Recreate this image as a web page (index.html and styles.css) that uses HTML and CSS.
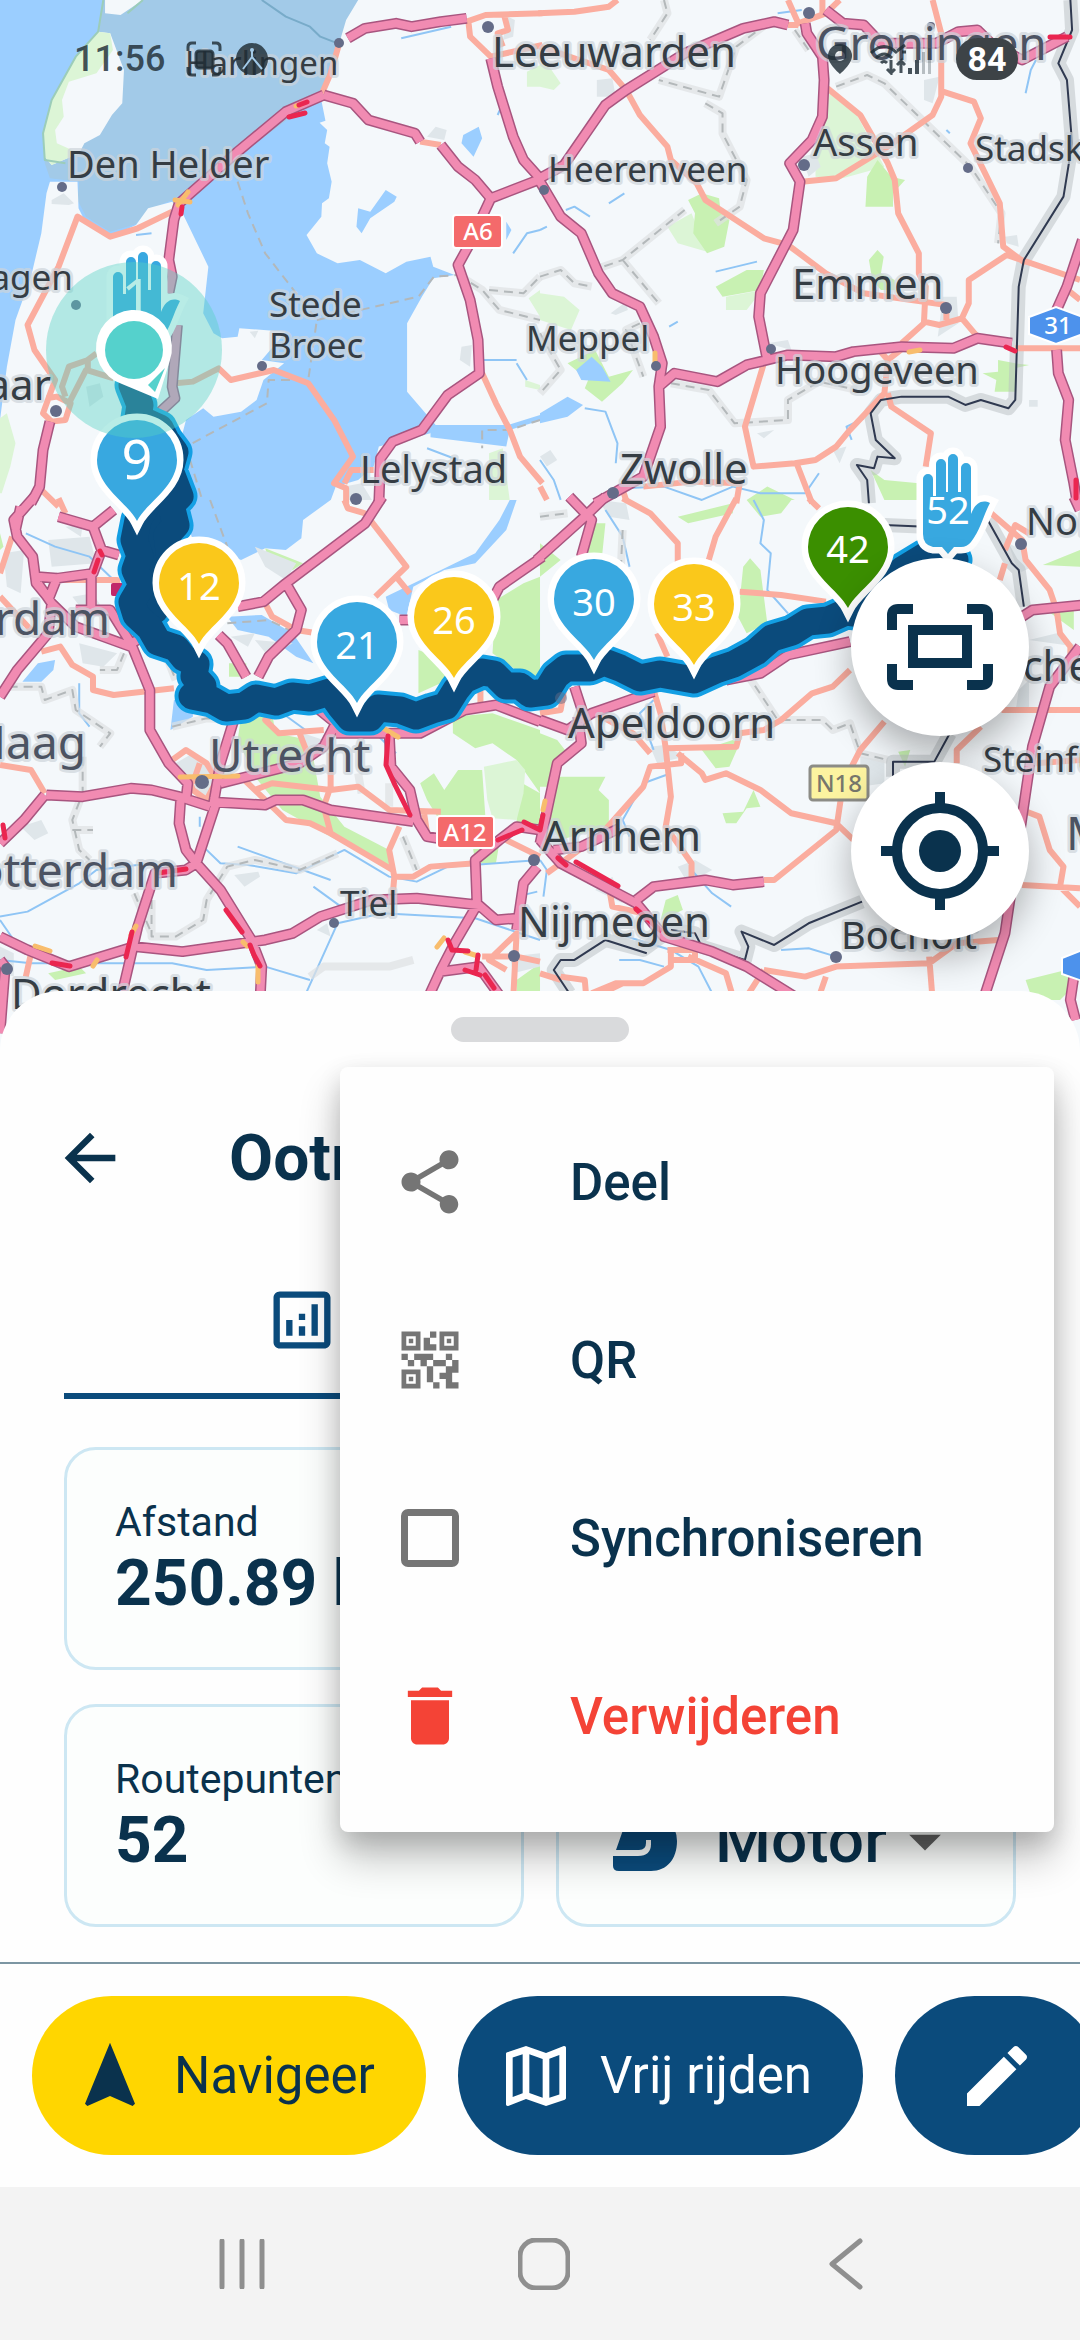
FILE: index.html
```html
<!DOCTYPE html>
<html lang="nl">
<head>
    <meta charset="UTF-8">
    <meta name="viewport" content="width=device-width, initial-scale=1.0">
    <title>Route</title>
    <link rel="stylesheet" href="styles.css">
</head>
<body>
<div class="screen">

    <section class="map">
        <svg class="map-canvas" viewBox="0 0 1080 1060" preserveAspectRatio="xMidYMin slice" role="img" aria-label="Kaart met route">
            <defs>
                <path id="m1" class="line" d="M1010,115L1060,85 1150,70 1195,80 1280,65 1355,55M940,285L1025,310 1070,360 1205,400 1220,425M1280,435L1330,500 1380,540 1425,595 1575,535M1425,175L1445,260 1490,410 1520,480 1568,535M940,285L830,335 690,455 520,610 505,660 490,780 500,830 490,880M515,975L500,1160 508,1195 450,1250M1425,595L1400,650 1370,720 1330,795 1365,900 1388,1020 1392,1120 1300,1185 1225,1290 1140,1325 1105,1375 1100,1510M145,1265L125,1350 115,1460 90,1510"/>
                <path id="m2" class="line" d="M-10,540L70,495 190,315 250,270 420,160 590,85 680,65 720,75M770,70L775,100 820,170 825,240 820,350 790,420 725,490 755,545 735,690 640,880 635,950 660,1080M830,30L880,70 940,75 990,130 1150,130 1215,95 1270,90 1310,130 1400,180 1530,110M0,545L60,650 120,700 170,820 210,880 290,920 330,1010 355,1090 345,1160 350,1280 300,1430 160,1510M345,1160L390,1120 515,1145 600,1095 720,1065 860,1070 910,1055 1050,1040 1200,1045 1270,1015 1370,1030M1575,720L1530,860 1500,930M1500,1050L1505,1120 1535,1200 1525,1320 1550,1450 1560,1510"/>
                <path id="m3" class="line" d="M100,-10L40,60 50,110 95,170 105,250 145,300M60,20L45,90M330,30L270,80 170,50M270,80L295,150 345,165M295,150L270,220 165,235 110,230M265,220V325M165,235L140,300M110,250L150,310 140,400 50,510 0,590M150,310L220,380 380,440M220,330H320L380,430 435,570V690L490,790 545,850 540,900M380,430L420,410M1110,-10L1060,70 830,250 765,305 690,320M830,250L875,330 860,390 780,470 750,530M635,405L660,430 715,530M685,640L640,790 620,910M640,850L870,790 940,740 975,670 910,615M975,700H1220L1350,630 1440,615 1568,665M1130,700L1135,800 1190,870 1210,960 1240,1010 1270,1015M135,885L240,890 380,865 440,870 520,890 610,920M610,905L770,915 800,900H880L960,930 1200,965M0,1030L70,960 130,885M525,890L520,970 540,1050 570,1090 630,900M570,1090L640,1170 730,1320 760,1400 755,1500M570,1090L540,1110 450,1120 400,1280 350,1500M0,1310L80,1350 200,1400 390,1340 530,1355 770,1320 850,1300 930,1250 1080,1200 1210,1195 1390,1215 1440,1260 1500,1255M1385,1215L1380,1080 1450,1020 1500,980 1568,990M1385,1215L1320,1330 1280,1410 1240,1500M1500,1290L1520,1150 1560,1100M1280,1415L1390,1400 1460,1500M1575,170L1450,260 1430,300M1160,360H1200M0,1380L15,1400 0,1600"/>
                <path id="m4" class="line" d="M-10,180L130,50 190,-10M85,-10L150,60 120,170M100,560L125,640M0,660L80,690 150,640 330,575M110,650L120,730 50,790 0,1030M0,1020L60,1090 280,1210 360,1310 500,1355 600,1400 740,1490M40,1050L120,1040 230,985M280,1200L330,1160 480,1140 560,1155 650,1145M540,540L640,520 720,465 900,425M1400,350L1430,330 1575,315M1568,440L1480,560 1430,740 1400,950 1350,1300 1290,1490M1550,-10L1568,30M1550,1430L1540,1500 1555,1560"/>
                <path id="route" d="M132,385L140,405 138,418 160,428 166,440 175,452 170,470 180,496 171,505 176,525 167,535 170,560M150,500L138,520 134,540 140,556 135,570 142,585 132,602 136,615 150,628 158,642 176,648 184,658 196,664 194,676 203,686 192,696 212,700 226,708 244,706 256,698 276,702 292,696 310,698 330,692 340,706 350,718 370,718 378,708 400,710 416,716 432,710 446,706 456,690 464,680 482,672 494,674 506,686 520,686 530,694 546,692 556,676 566,668 590,668 604,662 620,668 640,678 660,674 694,680 716,670 734,664 756,652 772,638 792,632 808,622 828,620 846,612 862,614 890,590 902,570 925,556 955,560"/>
                <path id="pin" d="M0,61C-9,43-40,27-40,0A40,40 0 1 1 40,0C40,27 9,43 0,61Z"/>
                <path id="hand" d="M0,25a5,5 0 0 1 10,0V42h3V10a5,5 0 0 1 10,0V38h2V5a5,5 0 0 1 10,0V38h3V14a5,5 0 0 1 10,0V60C52,50 58,45 67,49C60,62 58,75 48,88Q44,93 38,93H31L25,100L19,93H10Q0,91 0,80Z"/>
            </defs>

            <rect class="land" width="1080" height="1060"/>

            <!-- north west -->
            <g transform="scale(.3444 .3333)">
                <path class="water" d="M0,0H1568V900L1568,1500H0Z"/>
                <path class="wadden" d="M300,0H1040L1010,60 985,130 960,200 930,285 690,470 500,600 430,630 395,672 320,695 250,650 225,600 230,545 145,535 130,490 125,400 150,300 220,170 285,95Z"/>
                <path class="land" d="M1040,0H1570V1502H960L975,1460 1040,1440 1085,1400 1100,1340 1250,1300 1265,1275 1182,1175V970L1225,890 1258,835 1320,825 1258,800 1250,770 1180,785 1120,820 1045,780 980,790 920,760 890,705 933,650 935,610 955,595 963,545 950,490 957,440 943,430 950,390 928,368 945,362 930,285 960,200 985,130 1005,60Z"/>
                <path class="land" d="M145,545H225L228,625 250,670 320,710 395,675 430,625 500,605 530,640 605,800 590,940 620,1000 645,1015 690,1010 695,985 830,995 760,1080 825,1090 765,1140 745,1200 700,1235 620,1250 590,1225 540,1260 520,1340 545,1400 560,1502H0V1260L20,1100 45,960 90,830 120,700 135,580Z"/>
                <path class="land" d="M285,95L320,100 360,210 355,310 325,345 290,405 245,430 230,460 150,495 130,470 125,400 150,300 220,170ZM305,0H415L350,45 305,40Z"/>
                <path class="park" d="M285,95L320,100 328,150 280,220 200,245 180,300 185,350 160,390 165,430 230,460 150,495 130,470 125,400 150,300 220,170ZM0,1255L20,1240 45,1330 30,1400 5,1480 0,1480Z"/>
                <path class="coast line" d="M415,0L370,40M300,0L285,95L220,170 150,300 125,400 130,480 190,490"/>
                <path class="water" d="M1250,1275H1475L1568,1245V1262L1480,1290 1470,1340 1250,1312ZM1345,405L1390,380 1400,415 1375,470 1340,430ZM1040,625L1075,635 1120,570 1152,590 1145,605 1075,655 1050,700 1035,680ZM1470,665L1485,690 1470,720Z"/>
                <path class="park" d="M1530,215L1568,195V260H1530ZM1535,895L1568,870V950ZM1420,1360L1460,1345 1480,1500H1420ZM1525,1140L1568,1155V1170L1525,1160Z"/>
                <path class="urban" d="M150,600L185,580 215,610 200,615 150,612ZM1240,410L1265,380 1297,390 1290,420ZM1340,1040L1370,1035 1365,1100 1335,1080ZM1475,50L1495,60 1490,110 1460,120ZM725,995L750,992 740,1015ZM250,1160L290,1150 300,1190 260,1220ZM1000,1460L1050,1450 1080,1500H1000Z"/>
                <path class="river line" d="M395,705L440,700M1165,115L1310,80M1500,1080L1400,1080M1500,1090L1530,1140M1490,760L1530,700 1568,690M1445,345L1460,310M1240,1345L1330,1380"/>
                <path class="ferry line" d="M760,0L830,50 900,80 930,110 975,128"/>
                <path class="district line" d="M690,545L720,640 770,760 860,880 920,960 895,1140 780,1140 775,1210 540,1340 590,1510M920,960L1215,890 1260,830 1330,825"/>
                <path class="halo line" d="M1330,825L1400,870 1450,930 1568,960M1420,870L1520,880 1568,830"/>
                <path class="district line" d="M1330,825L1400,870 1450,930 1568,960M1420,870L1520,880 1568,830M1568,1260L1480,1290H1400V1345"/>
                <path class="primary line" d="M985,130L960,220 935,280M1355,65L1410,45 1575,40M1360,65L1365,110 1425,170 1575,135M1465,50L1475,90 1445,100 1460,140M500,635L400,685 320,710 225,650 170,800 80,975 100,1050 160,1140 125,1240 150,1265 190,1260 205,1210 165,1190 135,1195M190,1190L180,1160 200,1100 255,1080 280,1060M200,1210L250,1110 330,1135M255,1110V1080M510,1150L560,1145 635,1105 670,1140 795,1110 895,1150 970,1260 1025,1370 970,1450 1005,1465 1005,1510M1085,1410H1020L1000,1450M1400,1120L1440,1210 1480,1290 1510,1370 1575,1450M1220,425L1280,435M120,1470L170,1520"/>
            </g>

            <!-- north east -->
            <g transform="translate(540) scale(.3444 .3333)">
                <path class="park" d="M840,280L920,345 1000,500 860,540 800,530 800,440ZM0,190L30,205 60,250 40,270 0,260ZM370,680L440,640 485,755 400,730ZM540,890L645,870 600,930 540,930ZM0,880L70,890 115,930 90,990 0,960Z"/>
                <path class="wood" d="M980,480L1020,530 1060,540 1025,580V620L945,620 950,530ZM430,600L470,580 520,595 525,640 550,660 535,740 485,760 445,700 450,640ZM510,860L600,810 650,810 640,870 530,890ZM955,780L980,750 998,770 990,820 1030,840V870L990,870 965,840ZM1285,1120L1330,1115V1080L1380,1090 1420,1095 1380,1105V1175L1320,1175 1325,1140ZM80,1090L160,1050 200,1130 270,1110 240,1150 180,1205 130,1165 140,1140ZM960,1410L1000,1440 1100,1450V1500H1000ZM600,1500L660,1460 740,1500Z"/>
                <path class="water" d="M105,1110L150,1070 180,1100 205,1145 120,1140ZM0,1240L80,1190 125,1215 80,1250 0,1270Z"/>
                <path class="urban" d="M165,240L210,235 220,290 165,290ZM1115,240L1160,230 1140,310 1115,300ZM760,470L800,460 815,500 780,530ZM1170,890L1210,890 1215,970 1155,1010ZM660,1030L720,1020 730,1050ZM205,940L250,905 255,930 220,945ZM630,1300L680,1290 650,1315ZM0,1370L30,1350 50,1380 20,1400ZM850,1350L890,1340 870,1390ZM1420,1200H1445V1220H1420ZM1350,710L1385,705 1390,740 1355,730Z"/>
                <path class="river line" d="M75,630L100,620 145,650M200,610L245,580M0,690L20,680M375,980L400,965M510,815L570,800 630,785M130,1225L190,1235 210,1290 225,1330 220,1390M0,1380L40,1440 60,1500M240,1465L360,1460 470,1500 560,1460 640,1480 770,1480 810,1420M940,1255L890,1280 905,1320M1410,280L1425,210 1440,180M1180,390L1190,400M690,40L760,30"/>
                <path class="halo line" d="M360,0L370,40 320,120M660,70L570,140 520,290 345,240M480,310L530,340V400L600,540 580,620 510,670M420,630L240,780 170,805M240,780L345,910M860,260L950,225 1000,250 1250,500 1340,640 1330,730M0,830L60,810 100,850 150,860M380,1150L490,1170 565,1270 720,1260 720,1200 810,1145 920,1170M0,1000L60,1110 0,1180M290,970L250,990 300,1130M740,90L780,150"/>
                <path class="district line" d="M360,0L370,40 320,120M660,70L570,140 520,290 345,240M480,310L530,340V400L600,540 580,620 510,670M420,630L240,780 170,805M240,780L345,910M860,260L950,225 1000,250 1250,500 1340,640 1330,730M0,830L60,810 100,850 150,860M380,1150L490,1170 565,1270 720,1260 720,1200 810,1145 920,1170M0,1000L60,1110 0,1180M290,970L250,990 300,1130M740,90L780,150"/>
                <path class="border-halo line" d="M1540,0L1545,90 1505,190 1530,240 1545,430 1520,590 1405,780 1390,860 1380,1200 1360,1225 1280,1200 1235,1215 1185,1190H1050L990,1200 960,1240 975,1320 1030,1375 980,1370 970,1405 920,1395 950,1440 955,1510"/>
                <path class="primary line" d="M-5,40L100,35 200,20 225,0M-5,138L200,210 250,270 290,345 370,440 380,480 455,550 480,600 650,715 720,735 830,820 940,880 1110,905 1180,915V960M720,0L750,70 830,40 870,0M720,75H750M820,0V40M835,265L930,345 1010,490 1030,540 1040,640 1100,760 1100,820 1120,860 1115,965 1160,975 1225,955 1245,910V840L1355,765 1568,840M1140,0L1165,100V290L1140,345 1010,440 860,535 760,545M1170,275L1260,305 1280,355 1250,430 1335,610 1345,740 1410,790M1120,965L1050,1030M1225,955L1270,1010M1380,1045H1575M985,1050L1010,1080 1060,1040M1010,1080L1000,1180 900,1290 860,1340 800,1380 740,1390 620,1400 595,1280 650,1090M1010,1180L1020,1220 1135,1300 1120,1400M745,1390L790,1510M300,1460L440,1445 580,1450 570,1510M0,1460L20,1500M1520,860L1568,900M240,1470L250,1500"/>
                <path class="border line" d="M1540,0L1545,90 1505,190 1530,240 1545,430 1520,590 1405,780 1390,860 1380,1200 1360,1225 1280,1200 1235,1215 1185,1190H1050L990,1200 960,1240 975,1320 1030,1375 980,1370 970,1405 920,1395 950,1440 955,1510"/>
            </g>

            <!-- south west -->
            <g transform="translate(0 500) scale(.3444 .3333)">
                <path class="water" d="M520,0H960L880,60 875,115 830,150 770,145 700,180 560,120ZM1480,0H1500L1470,90 1380,190 1290,210 1200,260 1180,350 1130,330 1120,290 1300,200 1380,160 1450,60ZM660,350L760,345 850,400 910,490 860,470 780,410 690,390ZM505,600L560,590V650L495,690ZM65,545L110,490 160,480 155,510 120,545Z"/>
                <path class="wood" d="M665,490H715V530H665ZM700,650L790,640 800,700 900,720 930,890 1000,980 1130,1050V1100L960,1010 820,930 740,830 690,720ZM1215,450L1290,480 1300,540 1215,580ZM1440,300L1520,250 1568,230V560L1430,460ZM1315,650L1430,640 1568,690V880L1500,780 1430,730 1380,745 1315,700ZM1220,850L1260,820 1290,870 1330,810 1400,810 1410,960 1270,950 1240,900ZM1500,840L1568,880V980H1500ZM1370,1020L1450,1030 1440,1090 1380,1090ZM1500,1440L1568,1390V1500H1500ZM140,1420L230,1400 250,1420 160,1440ZM770,145L880,190 850,210 780,180ZM0,100L10,140 0,150Z"/>
                <path class="park" d="M1405,800L1500,780 1525,810 1520,880 1500,960 1430,955 1415,900Z"/>
                <path class="urban" d="M140,120L260,110 280,190 150,200ZM190,80L240,75 235,110ZM10,160L70,150 60,280 20,260ZM210,290L270,280 300,330 240,330ZM740,140L860,190 830,240 770,200ZM670,410L740,400 720,440ZM510,790L560,760 600,800 620,850 590,900 540,860ZM60,980L120,960 140,1000 100,1020ZM680,1125L750,1115 755,1130 710,1160ZM880,700L940,720 930,760 880,740ZM1480,1370L1568,1360V1400L1490,1420ZM0,1340L40,1360 40,1430 0,1420ZM900,610L960,610 940,660ZM920,1290L950,1270 960,1310ZM230,430L340,460 300,500 240,490ZM740,420L850,430 780,470Z"/>
                <path class="river line" d="M75,100L160,140 260,170 330,240M0,1250L80,1235 230,1150 280,1110 440,1090M590,1040L640,1090 720,1095 860,1120 1000,1050 1130,1130 1210,1145 1300,1100 1568,1080M0,1380L90,1390 500,1390 600,1410 770,1400 900,1440M880,1500L980,1270 1110,1240 1380,1255 1568,1320M910,1160L990,1220M690,1040L960,1140M40,1320L0,1260M1500,1190L1560,1175M580,950V980M230,550V640L260,680M820,640L900,700M1090,700L1150,760"/>
                <path class="halo line" d="M25,560L120,560 130,600 210,570 220,630 320,700 290,740M240,770V880L210,960 230,1050 260,1080M210,990H270M440,1200V1310H510L590,1260 600,1200 660,1100 740,1080 870,1110 980,1060M500,680L600,655 680,660M390,1180L440,1300M360,460L340,510 290,510M480,460L510,540M900,1430L940,1400 1130,1400 1200,1380M1170,1010L1210,1110M1040,820L1050,880M1130,850V920"/>
                <path class="district line" d="M25,560L120,560 130,600 210,570 220,630 320,700 290,740M240,770V880L210,960 230,1050 260,1080M210,990H270M440,1200V1310H510L590,1260 600,1200 660,1100 740,1080 870,1110 980,1060M500,680L600,655 680,660M390,1180L440,1300M360,460L340,510 290,510M480,460L510,540M1170,1010L1210,1110M610,0L660,140M660,370L780,360 860,400"/>
                <path class="primary line" d="M170,-5L190,40M35,110L0,220M110,240H340L345,300M0,290L90,390M120,455L175,440 210,495 270,530V570L330,585 505,565M0,795L90,810 130,880M500,780L540,750 600,790 630,840 600,900 560,870 545,830M1000,0L1010,25 1060,40 1180,200 1090,290M1150,230L1190,280M770,310L790,350 860,390 920,400M800,640L770,660 810,700 940,690M710,840L830,960 900,970 960,1000 1140,1110M740,870L790,850 960,870 1040,860 1130,930 1280,935M870,700L900,780M960,760V860L940,920 960,1000M1160,980L1130,1050 1145,1130 1140,1190M1150,1130H1200L1250,1100 1380,1090M1490,1500L1500,1300 1420,1380 1470,1410M75,1430L90,1360M1230,930L1240,1000M1395,570V620M1470,1020L1568,1070M1400,1370L1500,1370 1568,1385M580,790L560,850"/>
            </g>

            <!-- south east -->
            <g transform="translate(540 500) scale(.3444 .3333)">
                <path class="wood" d="M0,700L50,720 80,760 30,860 0,860ZM50,830L190,830 170,870 200,900 200,975 60,1020 20,960ZM590,200L610,175 640,210 660,370 600,400 575,350ZM470,750L560,720 580,730 550,800 510,805ZM530,940L590,935 620,870 640,920 600,925 570,970 540,970ZM365,1200L400,1185 415,1230 350,1260ZM400,50L560,10V40L430,70ZM600,0H730L700,40 640,50ZM150,70L190,70 180,170 150,190 130,150ZM1460,195L1568,150V200ZM1470,330L1550,330V390ZM1410,1440L1568,1400V1440L1510,1500 1430,1500ZM1040,755L1075,750 1060,800ZM0,130L60,180 0,230ZM800,320L850,400H800Z"/>
                <path class="urban" d="M320,740L360,735 420,770 340,790ZM400,1100L450,1080 500,1110 430,1150ZM170,0L250,10 260,60 200,50ZM1360,130L1400,150 1430,200 1390,220ZM1420,420L1500,400 1560,440ZM1390,570L1420,540V620L1380,640ZM930,770L1000,780 1000,850 930,860ZM380,560L440,555 430,575ZM160,1170L210,1130 240,1210Z"/>
                <path class="river line" d="M620,0L650,60 640,130 670,160 660,270 720,340M380,820L300,850 240,960 260,1010M330,600L290,640 330,750M0,1080L20,1110 10,1190M220,1300L380,1350 460,1400 500,1480M230,1380H290L360,1400M440,1110L500,1180 555,1220M700,1350L780,1345 860,1370M190,30L240,110 260,200"/>
                <path class="halo line" d="M0,50L80,40M240,90L235,200M600,520L690,660 820,660 850,690 900,670 930,760 1010,780"/>
                <path class="district line" d="M0,50L80,40M240,90L235,200M600,520L690,660 820,660 850,690 900,670 930,760 1010,780"/>
                <path class="border-halo line" d="M1000,75L1120,80M1300,60L1370,190 1390,210 1405,320M1190,700L1145,785H1025V830M935,1205L780,1270 680,1335 585,1295 605,1340 595,1380 470,1340 450,1300 380,1290 300,1350 190,1320 100,1380 60,1380 40,1410 85,1480"/>
                <path class="primary line" d="M240,-5L320,40 400,130V190M570,-5L510,110 490,180M580,275L700,285 830,305M340,400L370,470M900,510L850,560 790,580 700,660 650,690 580,700 570,740 365,745 350,640 330,570M365,745L380,890 365,980 440,1090V1150M320,760L270,700 170,645M410,760V790L320,800 300,860 180,1000 20,1120M400,760L470,820 480,840 540,820 640,870 730,940 860,970 910,1020M1000,665L930,750 880,850 860,990 680,1140H650M780,-5L810,25M1310,40L1400,120 1410,180 1480,270 1500,330 1510,400 1540,440V480M1350,190L1335,240M1350,150L1380,75 1420,100M1340,630H1575M1280,680L1210,750V790M1400,930L1450,950 1480,1050 1520,1100 1510,1160 1568,1220M1400,1155L1568,1165M380,1350V1400L300,1450 220,1450 150,1480M240,1450L160,1490M370,1350H450V1380H380M430,1370L540,1420 560,1490M650,1410L770,1430 860,1400 1130,1390 1210,1330 1330,1320M1130,1370L1140,1500M600,1490L650,1410M60,1430L130,1440 135,1500M810,1490L830,1430M1440,790L1568,780M70,570L60,630 0,640M200,1160L210,1220 300,1240M0,1420L60,1440"/>
                <path class="border line" d="M1000,75L1120,80M1300,60L1370,190 1390,210 1405,320M1190,700L1145,785H1025V830M935,1205L780,1270 680,1335 585,1295 605,1340 595,1380 470,1340 450,1300 380,1290M310,1360L190,1320 100,1380 60,1380 40,1410 85,1480"/>
            </g>

            <!-- motorways: casing first, then the fill -->
            <g class="casing">
                <use href="#m1" transform="scale(.3444 .3333)"/>
                <use href="#m2" transform="translate(540) scale(.3444 .3333)"/>
                <use href="#m3" transform="translate(0 500) scale(.3444 .3333)"/>
                <use href="#m4" transform="translate(540 500) scale(.3444 .3333)"/>
            </g>
            <g class="motorway">
                <use href="#m1" transform="scale(.3444 .3333)"/>
                <use href="#m2" transform="translate(540) scale(.3444 .3333)"/>
                <use href="#m3" transform="translate(0 500) scale(.3444 .3333)"/>
                <use href="#m4" transform="translate(540 500) scale(.3444 .3333)"/>
            </g>

            <!-- traffic -->
            <path class="slow" d="M178,205L188,192M175,200L190,202M296,106L302,104M383,728L398,737M180,777L238,776M35,946L50,951M136,926L131,935M97,960L93,966M243,942L247,946M258,965V982M437,947L444,938M465,952L478,956M909,352L920,350M655,353V362M545,801L543,810"/>
            <path class="jam" d="M299,105L307,102M289,117L305,113M182,207L181,214M388,736L386,765 395,785 410,815M226,910L242,932M250,945L254,955 260,966M132,932L126,957M448,940L452,950 468,951M478,955L476,970M465,970L480,975M498,840L522,830M524,822L540,830M52,963L70,966M158,873L186,869M98,560L94,572M100,551L102,555M543,815L540,830M558,858L566,865M576,862L618,886M636,909L660,930M1006,347L1015,351M1050,37H1070M1076,480V498M3,825L5,838M485,975L494,988"/>

            <g class="city-dot">
                <circle cx="339" cy="43" r="5"/><circle cx="488" cy="27" r="6"/><circle cx="62" cy="187" r="5"/><circle cx="76" cy="305" r="5"/><circle cx="262" cy="366" r="5"/><circle cx="56" cy="411" r="6"/><circle cx="356" cy="499" r="6"/>
                <circle cx="809" cy="13" r="6"/><circle cx="804" cy="165" r="6"/><circle cx="968" cy="168" r="5"/><circle cx="544" cy="190" r="5"/><circle cx="656" cy="366" r="5"/><circle cx="771" cy="349" r="5"/><circle cx="946" cy="308" r="6"/><circle cx="613" cy="493" r="6"/><circle cx="931" cy="26" r="4"/>
                <circle cx="202" cy="782" r="7"/><circle cx="334" cy="923" r="5"/><circle cx="514" cy="956" r="6"/><circle cx="534" cy="860" r="6"/><circle cx="7" cy="969" r="6"/><circle cx="1021" cy="544" r="6"/><circle cx="836" cy="957" r="6"/>
            </g>
            <rect class="capital" x="111" y="583" width="13" height="13" rx="2"/>

            <g class="route-edge"><path d="M155,505V610"/><use href="#route"/></g>
            <g class="route-core"><path d="M155,505V610"/><use href="#route"/></g>
            <circle class="city-dot faded" cx="561" cy="698" r="6"/>

            <g class="town">
                <text x="185" y="75" class="xs">Harlingen</text>
                <text x="548" y="182">Heerenveen</text>
                <text x="975" y="161">Stadskanaal</text>
                <text x="73" y="290" text-anchor="end">Schagen</text>
                <text x="269" y="317">Stede</text>
                <text x="269" y="358">Broec</text>
                <text x="526" y="351">Meppel</text>
                <text x="340" y="916">Tiel</text>
                <text x="983" y="772">Steinfurt</text>
                <text x="67" y="178" class="md">Den Helder</text>
                <text x="813" y="156" class="md">Assen</text>
                <text x="775" y="384" class="md">Hoogeveen</text>
                <text x="360" y="483" class="md">Lelystad</text>
                <text x="841" y="949" class="md">Bocholt</text>
                <text x="1026" y="535" class="md">Nordhorn</text>
                <text x="492" y="67" class="lg">Leeuwarden</text>
                <text x="51" y="400" class="lg" text-anchor="end">Alkmaar</text>
                <text x="792" y="299" class="lg">Emmen</text>
                <text x="620" y="484" class="lg">Zwolle</text>
                <text x="953" y="681" class="lg">Enschede</text>
                <text x="568" y="738" class="lg">Apeldoorn</text>
                <text x="542" y="851" class="lg">Arnhem</text>
                <text x="518" y="937" class="lg">Nijmegen</text>
                <text x="11" y="1009" class="lg">Dordrecht</text>
                <g class="xl">
                    <text x="816" y="60">Groningen</text>
                    <text x="110" y="635" text-anchor="end">Amsterdam</text>
                    <text x="86" y="759" text-anchor="end">Den Haag</text>
                    <text x="209" y="772">Utrecht</text>
                    <text x="178" y="887" text-anchor="end">Rotterdam</text>
                    <text x="1066" y="850">Münster</text>
                </g>
            </g>

            <g class="shield">
                <rect class="shield-a" x="453" y="215" width="49" height="33" rx="3"/><text x="478" y="240">A6</text>
                <rect class="shield-a" x="437" y="816" width="57" height="32" rx="3"/><text x="465" y="841">A12</text>
                <rect class="shield-n" x="810" y="766" width="58" height="34" rx="3"/><text class="dark" x="839" y="792">N18</text>
                <path class="shield-b" d="M1029,317L1056,307 1083,317V334L1056,344 1029,334Z"/><text x="1058" y="334">31</text>
                <path class="shield-b" d="M1062,958L1085,949V982L1062,974Z"/>
            </g>

            <g class="pins">
                <use class="blue" href="#hand" x="113" y="252"/>
                <text x="137" y="318" class="big">1</text>
                <use class="blue" href="#pin" x="137" y="460"/><text x="137" y="479" class="big">9</text>
                <use class="yellow" href="#pin" x="199" y="583"/><text x="199" y="600">12</text>
                <use class="blue" href="#pin" x="357" y="642"/><text x="357" y="659">21</text>
                <use class="yellow" href="#pin" x="454" y="617"/><text x="454" y="634">26</text>
                <use class="blue" href="#pin" x="594" y="599"/><text x="594" y="616">30</text>
                <use class="yellow" href="#pin" x="694" y="604"/><text x="694" y="621">33</text>
                <use class="green" href="#pin" x="848" y="547"/><text x="848" y="563">42</text>
                <use class="blue" href="#hand" x="923" y="454"/><text x="948" y="524">52</text>
            </g>

            <!-- current position -->
            <circle class="me-halo" cx="134" cy="350" r="88"/>
            <path class="me-edge" d="M122,384A38,38 0 1 1 170,360L158,399Z"/>
            <path class="me-dot" d="M148,385L165,368L155,392Z"/>
            <circle class="me-dot" cx="134" cy="350" r="29"/>
        </svg>

        <header class="status">
            <time>11:56</time>
            <svg width="36" height="36" viewBox="0 0 36 36" fill="none" stroke="currentColor" stroke-width="3"><path d="M2 10V6q0-4 4-4h4M26 2h4q4 0 4 4v4M34 26v4q0 4-4 4h-4M10 34H6q-4 0-4-4v-4"/><rect x="10" y="10" width="17" height="17" rx="3" fill="currentColor"/></svg>
            <svg width="34" height="34" viewBox="0 0 34 34"><circle cx="17" cy="17" r="16" fill="currentColor"/><path d="M17 9v6L8 27M17 15l10 12" stroke="#a2cae8" stroke-width="2" fill="none"/><circle cx="17" cy="8" r="2" fill="#a2cae8"/></svg>
            <span class="spacer"></span>
            <svg width="24" height="30" viewBox="0 0 24 30"><path fill="currentColor" fill-rule="evenodd" d="M12 0a12 12 0 0 1 12 12c0 8-12 18-12 18S0 20 0 12A12 12 0 0 1 12 0zm0 7a5 5 0 1 0 0 10 5 5 0 0 0 0-10z"/></svg>
            <svg class="wifi" width="38" height="32" viewBox="0 0 38 32" fill="none" stroke="currentColor" stroke-width="3"><path d="M2 10Q15-3 28 10M7 15q8-8 16 0M12 20q3-3 6 0M22 17v13l-4-4m4 4 4-4M32 30V18l-4 4m4-4 4 4"/><path d="M28 8l8-6M33 9h4"/></svg>
            <svg class="signal" width="24" height="30" viewBox="0 0 24 30" fill="currentColor"><path d="M1 24h4v6H1zM8 16h4v14H8z"/><path opacity=".35" d="M15 8h3v22h-3zM21 4h3v26h-3z"/></svg>
            <span class="battery">84</span>
        </header>

        <div class="map-controls">
            <button class="fab" type="button" aria-label="Hele route tonen">
                <svg width="106" height="86" viewBox="0 0 106 86" fill="none" stroke="currentColor" stroke-width="10"><path d="M5 26V11q0-6 6-6h15M80 5h15q6 0 6 6v15M101 60v15q0 6-6 6H80M26 81H11q-6 0-6-6V60"/><rect x="26" y="26" width="54" height="33"/></svg>
            </button>
            <button class="fab" type="button" aria-label="Mijn locatie">
                <svg width="118" height="118" viewBox="0 0 118 118" fill="none" stroke="currentColor" stroke-width="10"><circle cx="59" cy="59" r="43"/><path d="M59 0v14M59 104v14M0 59h14M104 59h14"/><circle cx="59" cy="59" r="21" fill="currentColor" stroke="none"/></svg>
            </button>
        </div>
    </section>

    <main class="sheet">
        <div class="handle"></div>

        <div class="sheet-header">
            <button class="icon-btn" type="button" aria-label="Terug">
                <svg class="icon" viewBox="0 0 24 24"><path d="M20 11H7.83l5.59-5.59L12 4l-8 8 8 8 1.41-1.41L7.83 13H20v-2z"/></svg>
            </button>
            <h1>Ootmarsum</h1>
        </div>

        <div class="tabs">
            <button class="tab active" type="button" aria-label="Statistieken">
                <svg class="icon" viewBox="0 0 24 24"><path d="M19 3H5c-1.100 0-2 .9-2 2v14c0 1.100.9 2 2 2h14c1.100 0 2-.9 2-2V5c0-1.100-.9-2-2-2zm0 16H5V5h14v14zM7 12h2v5H7zM15 7h2v10h-2zM11 14h2v3h-2zM11 10h2v2h-2z"/></svg>
            </button>
            <button class="tab" type="button" aria-label="Lijst"></button>
        </div>

        <div class="cards">
            <div class="card">
                <span class="label">Afstand</span>
                <span class="value">250.89 km</span>
            </div>
            <div class="card"></div>
            <div class="card">
                <span class="label">Routepunten</span>
                <span class="value">52</span>
            </div>
            <div class="card">
                <label class="label" for="vehicle">Voertuig</label>
                <div class="vehicle">
                    <svg class="helmet" width="64" height="64" viewBox="0 0 64 64"><path fill="currentColor" d="M8 2h26a30 30 0 0 1 30 30c0 18-10 30-26 30H6q-6 0-6-5V47h25q13 0 13-12v-4h-5v3q0 7-7 7H3l7-20z"/></svg>
                    <select id="vehicle">
                        <option>Motor</option>
                        <option>Auto</option>
                    </select>
                    <svg class="icon caret" viewBox="0 0 24 24"><path d="M7 10l5 5 5-5z"/></svg>
                </div>
            </div>
        </div>

        <div class="menu" role="menu">
            <button class="menu-item" type="button" role="menuitem">
                <svg class="icon" viewBox="0 0 24 24"><path d="M18 16.080c-.76 0-1.440.3-1.960.77L8.910 12.700c.05-.23.09-.46.09-.7s-.04-.47-.09-.7l7.050-4.110c.54.5 1.250.81 2.040.81 1.660 0 3-1.340 3-3s-1.340-3-3-3-3 1.340-3 3c0 .24.04.47.09.7L8.040 9.810C7.500 9.310 6.790 9 6 9c-1.660 0-3 1.340-3 3s1.340 3 3 3c.79 0 1.500-.31 2.040-.81l7.120 4.160c-.05.21-.08.43-.08.65 0 1.610 1.310 2.920 2.920 2.920s2.920-1.310 2.920-2.920-1.310-2.920-2.920-2.920z"/></svg>
                Deel
            </button>
            <button class="menu-item" type="button" role="menuitem">
                <svg class="icon" viewBox="0 0 24 24"><path fill-rule="evenodd" d="M3 3h6v6H3zM4.500 4.500v3h3v-3zM15 3h6v6h-6zM16.500 4.500v3h3v-3zM3 15h6v6H3zM4.500 16.500v3h3v-3zM5.300 5.300h1.400v1.400H5.300zM17.300 5.300h1.400v1.400h-1.400zM5.300 17.300h1.400v1.400H5.300zM12 3h2v2h-2zM10 5h2v2h2v2h-4zM3 10h2v2H3zM5 12h2v2H5zM7 10h6v2h-2v2H9v-2H7zM13 12h4v2h-4zM17 10h2v2h-2zM19 12h2v4h-2zM11 14h2v5h-2zM15 16h4v3h2v2h-4v-3h-2zM17 14h2v2h-2zM13 19h2v2h-2z"/></svg>
                QR
            </button>
            <label class="menu-item" role="menuitem">
                <input type="checkbox" name="sync">
                Synchroniseren
            </label>
            <button class="menu-item danger" type="button" role="menuitem">
                <svg class="icon" viewBox="0 0 24 24"><path d="M6 19c0 1.100.9 2 2 2h8c1.100 0 2-.9 2-2V7H6v12zM19 4h-3.500l-1-1h-5l-1 1H5v2h14V4z"/></svg>
                Verwijderen
            </button>
        </div>
    </main>

    <div class="actions">
        <button class="action primary-action" type="button">
            <svg class="icon" viewBox="0 0 24 24"><path d="M12 2L4.500 20.290l.71.71L12 18l6.790 3 .71-.71z"/></svg>
            Navigeer
        </button>
        <button class="action" type="button">
            <svg class="icon" viewBox="0 0 24 24"><path d="M20.500 3l-.16.030L15 5.100 9 3 3.360 4.900c-.21.070-.36.250-.36.480V20.500c0 .28.220.5.5.5l.16-.030L9 18.900l6 2.100 5.640-1.900c.21-.070.36-.25.36-.48V3.500c0-.28-.22-.5-.5-.5zM10 5.470l4 1.400v11.660l-4-1.400V5.470zM5 6.460l3-1.010v11.700l-3 1.160V6.460zm14 11.080l-3 1.010V6.860l3-1.160v11.840z"/></svg>
            Vrij rijden
        </button>
        <button class="action edit" type="button" aria-label="Bewerken">
            <svg class="icon" viewBox="0 0 24 24"><path d="M3 17.250V21h3.750L17.810 9.940l-3.750-3.750L3 17.250zM20.710 7.040c.39-.39.39-1.020 0-1.410l-2.340-2.340c-.39-.39-1.020-.39-1.410 0l-1.830 1.830 3.750 3.750 1.830-1.830z"/></svg>
        </button>
    </div>

    <nav class="system-nav">
        <button type="button" aria-label="Recente apps">
            <svg width="46" height="50" viewBox="0 0 46 50"><path d="M3 2v46M23 2v46M43 2v46"/></svg>
        </button>
        <button type="button" aria-label="Startscherm">
            <svg width="52" height="52" viewBox="0 0 52 52"><rect x="2" y="2" width="48" height="48" rx="16"/></svg>
        </button>
        <button type="button" aria-label="Vorige">
            <svg width="34" height="52" viewBox="0 0 34 52"><path d="M31 3L3 26l28 23"/></svg>
        </button>
    </nav>

</div>
</body>
</html>
```

FILE: styles.css
```css
* {
    box-sizing: border-box;
}
body {
    margin: 0;
    font-family: Roboto, "Noto Sans", sans-serif;
    color: #0a324d;
    background: #fefefe;
}
button, select {
    font: inherit;
    color: inherit;
    background: none;
    border: none;
    padding: 0;
    cursor: pointer;
}
svg {
    flex: none;
    display: block;
}
.screen {
    display: flex;
    flex-direction: column;
    min-height: 100vh;
    overflow: hidden;
}
.icon {
    width: 76px;
    height: 76px;
    fill: currentColor;
}

/* Map */
.map {
    position: relative;
    flex: 1;
    min-height: 600px;
    margin-bottom: -64px;
    overflow: hidden;
}
.map-canvas {
    position: absolute;
    inset: 0;
    width: 100%;
    height: 100%;
}
.line {
    fill: none;
    vector-effect: non-scaling-stroke;
    stroke-linejoin: round;
}
.land { fill: #f4f8fb; }
.water { fill: #9bceff; }
.wadden { fill: #a2cae8; }
.park { fill: #dcf5d6; }
.wood { fill: #c8f1b2; }
.urban { fill: #dfe6ea; }
.coast { stroke: #9ccdb9; stroke-width: 2px; }
.ferry { stroke: #78abc9; stroke-width: 2px; }
.river { stroke: #8fc5f5; stroke-width: 2px; }
.halo { stroke: #dfe2e4; stroke-width: 8px; opacity: .7; }
.district { stroke: #b3b8ba; stroke-width: 2px; stroke-dasharray: 9 6; }
.border-halo { stroke: #b9bfc3; stroke-width: 14px; opacity: .5; }
.border { stroke: #2f3950; stroke-width: 2px; }
.primary { stroke: #fbad9f; stroke-width: 6px; }
.casing { stroke: #a8557f; stroke-width: 11px; }
.motorway { stroke: #f18bb2; stroke-width: 8px; }
.slow { fill: none; stroke: #f8bd6d; stroke-width: 5px; stroke-linecap: round; }
.jam { fill: none; stroke: #ea2650; stroke-width: 5px; stroke-linecap: round; stroke-linejoin: round; }
.city-dot { fill: #646c88; }
.faded { opacity: .5; }
.capital { fill: #c1286a; }
.route-edge, .route-core {
    fill: none;
    stroke-linecap: round;
    stroke-linejoin: round;
}
.route-edge { stroke: #139fe4; stroke-width: 35px; }
.route-core { stroke: #0b4b7c; stroke-width: 27px; }

.town {
    font-family: "Noto Sans", sans-serif;
    font-size: 35px;
    fill: #353d44;
    stroke: rgba(205, 212, 218, .7);
    stroke-width: 6px;
    stroke-linejoin: round;
    paint-order: stroke;
}
.town .xs { font-size: 33px; }
.town .md { font-size: 38px; }
.town .lg { font-size: 42px; }
.town .xl { font-size: 46px; fill: #4c5362; }

.shield {
    font-family: "Noto Sans", sans-serif;
    font-size: 24px;
    font-weight: 500;
    text-anchor: middle;
    fill: #fff;
}
.shield-a { fill: #f46a6b; stroke: #fff; stroke-width: 2px; }
.shield-b { fill: #4d92ec; stroke: #fff; stroke-width: 2px; }
.shield-n { fill: #fcf3a0; stroke: #8c8c86; stroke-width: 3px; }
.shield .dark { fill: #77776c; }

.pins use {
    stroke: #fff;
    stroke-width: 13px;
    paint-order: stroke;
}
.pins text {
    font-family: "Noto Sans", sans-serif;
    font-size: 38px;
    text-anchor: middle;
    fill: #fff;
}
.pins .big { font-size: 54px; }
.blue { fill: #38a8e0; }
.yellow { fill: #fac81b; }
.green { fill: #3b8f00; }

.me-halo { fill: rgba(85, 209, 195, .42); }
.me-edge { fill: #fff; }
.me-dot { fill: #55d1cc; }

.status {
    position: absolute;
    top: 38px;
    left: 0;
    right: 0;
    display: flex;
    align-items: center;
    gap: 13px;
    height: 42px;
    padding: 0 62px 0 74px;
    font-size: 36px;
    font-weight: 500;
    color: rgba(32, 45, 54, .82);
}
.status time {
    margin-right: 8px;
}
.spacer {
    flex: 1;
}
.wifi {
    margin-left: 4px;
}
.signal {
    margin-left: -13px;
    margin-right: 12px;
}
.battery {
    width: 62px;
    border-radius: 21px;
    background: #3d4347;
    color: #fff;
    font-size: 34px;
    font-weight: 700;
    line-height: 42px;
    text-align: center;
}

.map-controls {
    position: absolute;
    right: 51px;
    bottom: 115px;
    display: flex;
    flex-direction: column;
    gap: 26px;
}
.fab {
    display: flex;
    align-items: center;
    justify-content: center;
    width: 178px;
    height: 178px;
    border-radius: 50%;
    background: #fff;
    box-shadow: 0 16px 36px rgba(0, 0, 0, .3);
}

/* Bottom sheet */
.sheet {
    position: relative;
    z-index: 1;
    padding: 26px 64px 35px;
    border-radius: 60px 60px 0 0;
    background: #fefefe;
}
.handle {
    width: 178px;
    height: 25px;
    margin: 0 auto;
    border-radius: 13px;
    background: #d9dadc;
}
.sheet-header {
    display: flex;
    align-items: center;
    gap: 101px;
    height: 100px;
    margin-top: 66px;
}
.icon-btn {
    margin-left: -12px;
}
.sheet-header h1 {
    margin: 0;
    font-size: 64px;
    font-weight: 700;
}
.tabs {
    display: flex;
    height: 152px;
    margin-top: 39px;
}
.tab {
    flex: 1;
    display: flex;
    align-items: center;
    justify-content: center;
    border-bottom: 6px solid transparent;
    color: #0b4b7c;
}
.tab.active {
    border-bottom-color: #0b4b7c;
}
.cards {
    display: grid;
    grid-template-columns: 1fr 1fr;
    gap: 34px 32px;
    margin-top: 48px;
}
.card {
    display: flex;
    flex-direction: column;
    min-height: 223px;
    padding: 48px;
    padding-bottom: 45px;
    border: 3px solid #cde7f3;
    border-radius: 32px;
    background: #fcfefd;
}
.label {
    font-size: 41px;
    line-height: 48px;
}
.value {
    font-size: 64px;
    font-weight: 700;
    line-height: 76px;
}
.vehicle {
    display: flex;
    align-items: center;
    height: 76px;
    padding-left: 6px;
}
.helmet {
    margin-right: 38px;
    color: #0b4b7c;
}
.vehicle select {
    appearance: none;
    font-size: 64px;
    font-weight: 500;
    line-height: 76px;
}
.caret {
    color: #616161;
}

/* Popup menu */
.menu {
    position: absolute;
    top: 76px;
    right: 26px;
    width: 714px;
    padding: 26px 0 27px;
    border-radius: 8px;
    background: #fefefe;
    box-shadow: 0 26px 40px rgba(0, 0, 0, .24), 0 10px 24px rgba(0, 0, 0, .14);
}
.menu-item {
    display: flex;
    align-items: center;
    gap: 102px;
    width: 100%;
    height: 178px;
    padding: 0 52px;
    font-size: 51px;
    font-weight: 500;
    cursor: pointer;
}
.menu-item .icon {
    color: #757575;
}
.menu-item input {
    appearance: none;
    width: 58px;
    height: 58px;
    margin: 9px;
    border: 7px solid #757575;
    border-radius: 7px;
}
.menu-item.danger, .menu-item.danger .icon {
    color: #f44336;
}

/* Action buttons */
.actions {
    display: flex;
    gap: 32px;
    padding: 32px;
    border-top: 2px solid #7c96a3;
    overflow: hidden;
}
.action {
    display: flex;
    flex: none;
    align-items: center;
    justify-content: center;
    gap: 24px;
    height: 159px;
    padding: 0 51px 0 38px;
    border-radius: 80px;
    background: #0b4b7c;
    color: #fff;
    font-size: 51px;
}
.action .icon {
    width: 80px;
    height: 80px;
}
.primary-action {
    background: #ffd600;
    color: #0a324d;
}
.edit {
    padding: 0 62px;
}

/* Android navigation bar */
.system-nav {
    display: flex;
    height: 153px;
    padding: 0 83px 0 91px;
    background: #f3f3f3;
}
.system-nav button {
    flex: 1;
    display: flex;
    align-items: center;
    justify-content: center;
}
.system-nav svg {
    fill: none;
    stroke: #8f8f8f;
    stroke-width: 5px;
    stroke-linecap: round;
    stroke-linejoin: round;
}
```
